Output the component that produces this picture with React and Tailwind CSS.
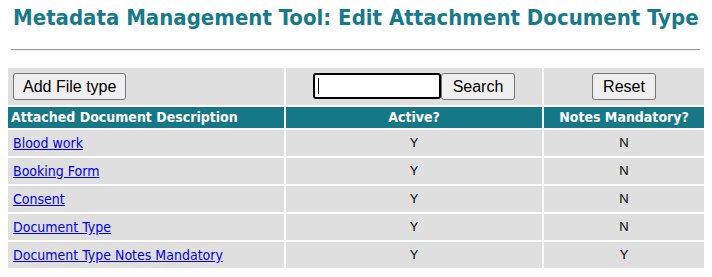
export default function App() {
  const rows = [
    ["Blood work", "Y", "N"],
    ["Booking Form", "Y", "N"],
    ["Consent", "Y", "N"],
    ["Document Type", "Y", "N"],
    ["Document Type Notes Mandatory", "Y", "Y"],
  ];
  const btn =
    "h-[27px] px-[9px] bg-[#efefef] border border-[#767676] rounded-[3px] text-[16px] text-black font-['Liberation_Sans',Arial,sans-serif] leading-none";
  const head =
    "mt-[2px] h-[21px] bg-[#167886] text-white font-bold text-[14px] leading-[21px] font-['DejaVu_Sans_Condensed','DejaVu_Sans',sans-serif]";
  return (
    <div className="w-[712px] h-[277px] bg-white overflow-hidden">
      <h1 className="pl-[13px] pt-[6px] h-[30px] text-[22px] leading-[24px] font-bold text-[#17798a] font-['DejaVu_Sans_Condensed','DejaVu_Sans',sans-serif] whitespace-nowrap">
        Metadata Management Tool: Edit Attachment Document Type
      </h1>
      <div className="ml-[11px] w-[689px] mt-[19px] h-[2px] border-t border-[#9a9a9a] border-b border-b-[#eeeeee]" />
      <div className="ml-[8px] mt-[17px] grid grid-cols-[276px_256px_160px] gap-x-[2px] w-[696px]">
        <div className="h-[37px] bg-[#dfdfdf] flex items-start pt-[5px] pl-[5px]">
          <button className={btn}>Add File type</button>
        </div>
        <div className="h-[37px] bg-[#dfdfdf] flex items-start justify-center pt-[5px]">
          <div className="flex">
            <div className="w-[128px] h-[26px] border-2 border-black rounded-[3px] bg-white flex items-center pl-[3px]">
              <div className="w-px h-[16px] bg-black" />
            </div>
            <button className={btn + " w-[74px]"}>Search</button>
          </div>
        </div>
        <div className="h-[37px] bg-[#dfdfdf] flex items-start justify-center pt-[5px]">
          <button className={btn + " w-[64px]"}>Reset</button>
        </div>
        <div className={head + " pl-[3px]"}>Attached Document Description</div>
        <div className={head + " text-center"}>Active?</div>
        <div className={head + " text-center"}>Notes Mandatory?</div>
        {rows.map(([a, b, c]) => (
          <div key={a} className="contents">
            <div className="mt-[2px] h-[26px] bg-[#dfdfdf] pl-[5px] text-[14px] leading-[26px] font-['DejaVu_Sans_Condensed','DejaVu_Sans',sans-serif]">
              <a href="#" className="text-[#0000ee] underline">{a}</a>
            </div>
            <div className="mt-[2px] h-[26px] bg-[#dfdfdf] text-center text-[13px] leading-[26px] text-black font-['Liberation_Sans',Arial,sans-serif]">
              {b}
            </div>
            <div className="mt-[2px] h-[26px] bg-[#dfdfdf] text-center text-[13px] leading-[26px] text-black font-['Liberation_Sans',Arial,sans-serif]">
              {c}
            </div>
          </div>
        ))}
      </div>
    </div>
  );
}
